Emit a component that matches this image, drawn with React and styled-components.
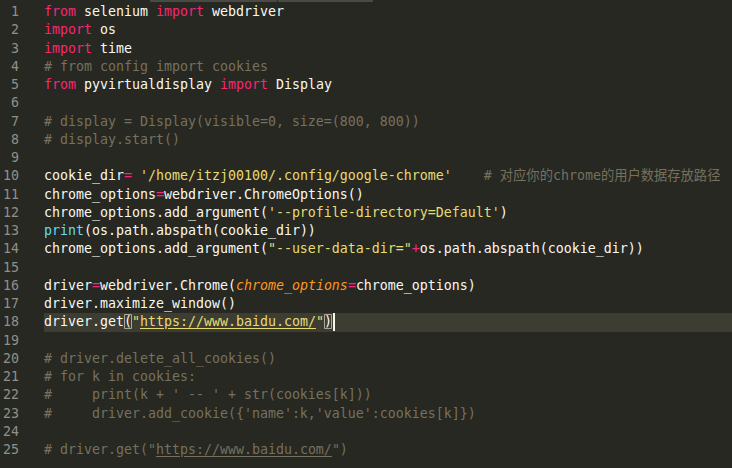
import styled, { createGlobalStyle } from "styled-components"

const GlobalStyle = createGlobalStyle`
    html, body {
        margin: 0;
        padding: 0;
        background: #272822;
    }
`

const COLORS = {
    text: '#f8f8f2',
    kw: '#f92672',
    op: '#f92672',
    str: '#e6db74',
    cm: '#75715e',
    fn: '#66d9ef',
    param: '#fd971f',
}

const Editor = styled.main`
    width: 732px;
    height: 468px;
    overflow: hidden;
    background: #272822;
    display: flex;
    flex-direction: column;
    font-family: "DejaVu Sans Mono", "Noto Sans CJK SC", monospace;
    font-size: 13.29px;
`
const TabEdge = styled.div`
    display: flex;
    height: 2px;
    padding-left: 150px;
    margin-bottom: 1px;
`
const TabPiece = styled.div`
    width: ${p => p.$w}px;
    background: #4a4a44;
    margin-right: 1px;
`
const Row = styled.div`
    display: flex;
    height: 18.25px;
    line-height: 18.25px;
`
const Gutter = styled.span`
    width: 44px;
    flex-shrink: 0;
    box-sizing: border-box;
    padding-right: 25px;
    text-align: right;
    color: #8f908a;
`
const Code = styled.span`
    flex: 1;
    white-space: pre;
    color: ${COLORS.text};
    background: ${p => (p.$active ? '#3e3d32' : 'transparent')};
`
const Tok = styled.span`
    color: ${p => COLORS[p.$k] || COLORS.text};
    font-style: ${p => (p.$k === 'param' ? 'italic' : 'normal')};
`
const Url = styled.span`
    color: ${p => COLORS[p.$k]};
    text-decoration: underline;
    text-underline-offset: 2px;
`
const Bracket = styled.span`
    color: ${COLORS.text};
    box-shadow: inset 0 0 0 1px #a8a89c;
    border-radius: 1px;
`
const Caret = styled.span`
    display: inline-block;
    width: 2px;
    height: 18px;
    margin-left: 1px;
    vertical-align: top;
    background: #f8f8f0;
`

const lines = [
    [['kw', 'from'], ' selenium ', ['kw', 'import'], ' webdriver'],
    [['kw', 'import'], ' os'],
    [['kw', 'import'], ' time'],
    [['cm', '# from config import cookies']],
    [['kw', 'from'], ' pyvirtualdisplay ', ['kw', 'import'], ' Display'],
    [],
    [['cm', '# display = Display(visible=0, size=(800, 800))']],
    [['cm', '# display.start()']],
    [],
    ['cookie_dir', ['op', '='], ' ', ['str', "'/home/itzj00100/.config/google-chrome'"], '    ', ['cm', '# 对应你的chrome的用户数据存放路径']],
    ['chrome_options', ['op', '='], 'webdriver.ChromeOptions()'],
    ['chrome_options.add_argument(', ['str', "'--profile-directory=Default'"], ')'],
    [['fn', 'print'], '(os.path.abspath(cookie_dir))'],
    ['chrome_options.add_argument(', ['str', '"--user-data-dir="'], ['op', '+'], 'os.path.abspath(cookie_dir))'],
    [],
    ['driver', ['op', '='], 'webdriver.Chrome(', ['param', 'chrome_options'], ['op', '='], 'chrome_options)'],
    ['driver.maximize_window()'],
    ['driver.get', ['br', '('], ['str', '"'], ['url', 'https://www.baidu.com/', 'str'], ['str', '"'], ['br', ')'], ['caret']],
    [],
    [['cm', '# driver.delete_all_cookies()']],
    [['cm', '# for k in cookies:']],
    [['cm', "#     print(k + ' -- ' + str(cookies[k]))"]],
    [['cm', "#     driver.add_cookie({'name':k,'value':cookies[k]})"]],
    [],
    [['cm', '# driver.get("'], ['url', 'https://www.baidu.com/', 'cm'], ['cm', '")']],
]

const renderTok = (t, i) => {
    if (typeof t === 'string') return <Tok key={i}>{t}</Tok>
    const [k, text, extra] = t
    if (k === 'url') return <Url key={i} $k={extra}>{text}</Url>
    if (k === 'br') return <Bracket key={i}>{text}</Bracket>
    if (k === 'caret') return <Caret key={i} />
    return <Tok key={i} $k={k}>{text}</Tok>
}

const App = () => {
    return (
        <Editor>
            <GlobalStyle />
            <TabEdge>
                <TabPiece $w={127} />
                <TabPiece $w={95} />
            </TabEdge>
            {lines.map((toks, n) => (
                <Row key={n}>
                    <Gutter>{n + 1}</Gutter>
                    <Code $active={n === 17}>{toks.map(renderTok)}</Code>
                </Row>
            ))}
        </Editor>
    )
}
export default App
